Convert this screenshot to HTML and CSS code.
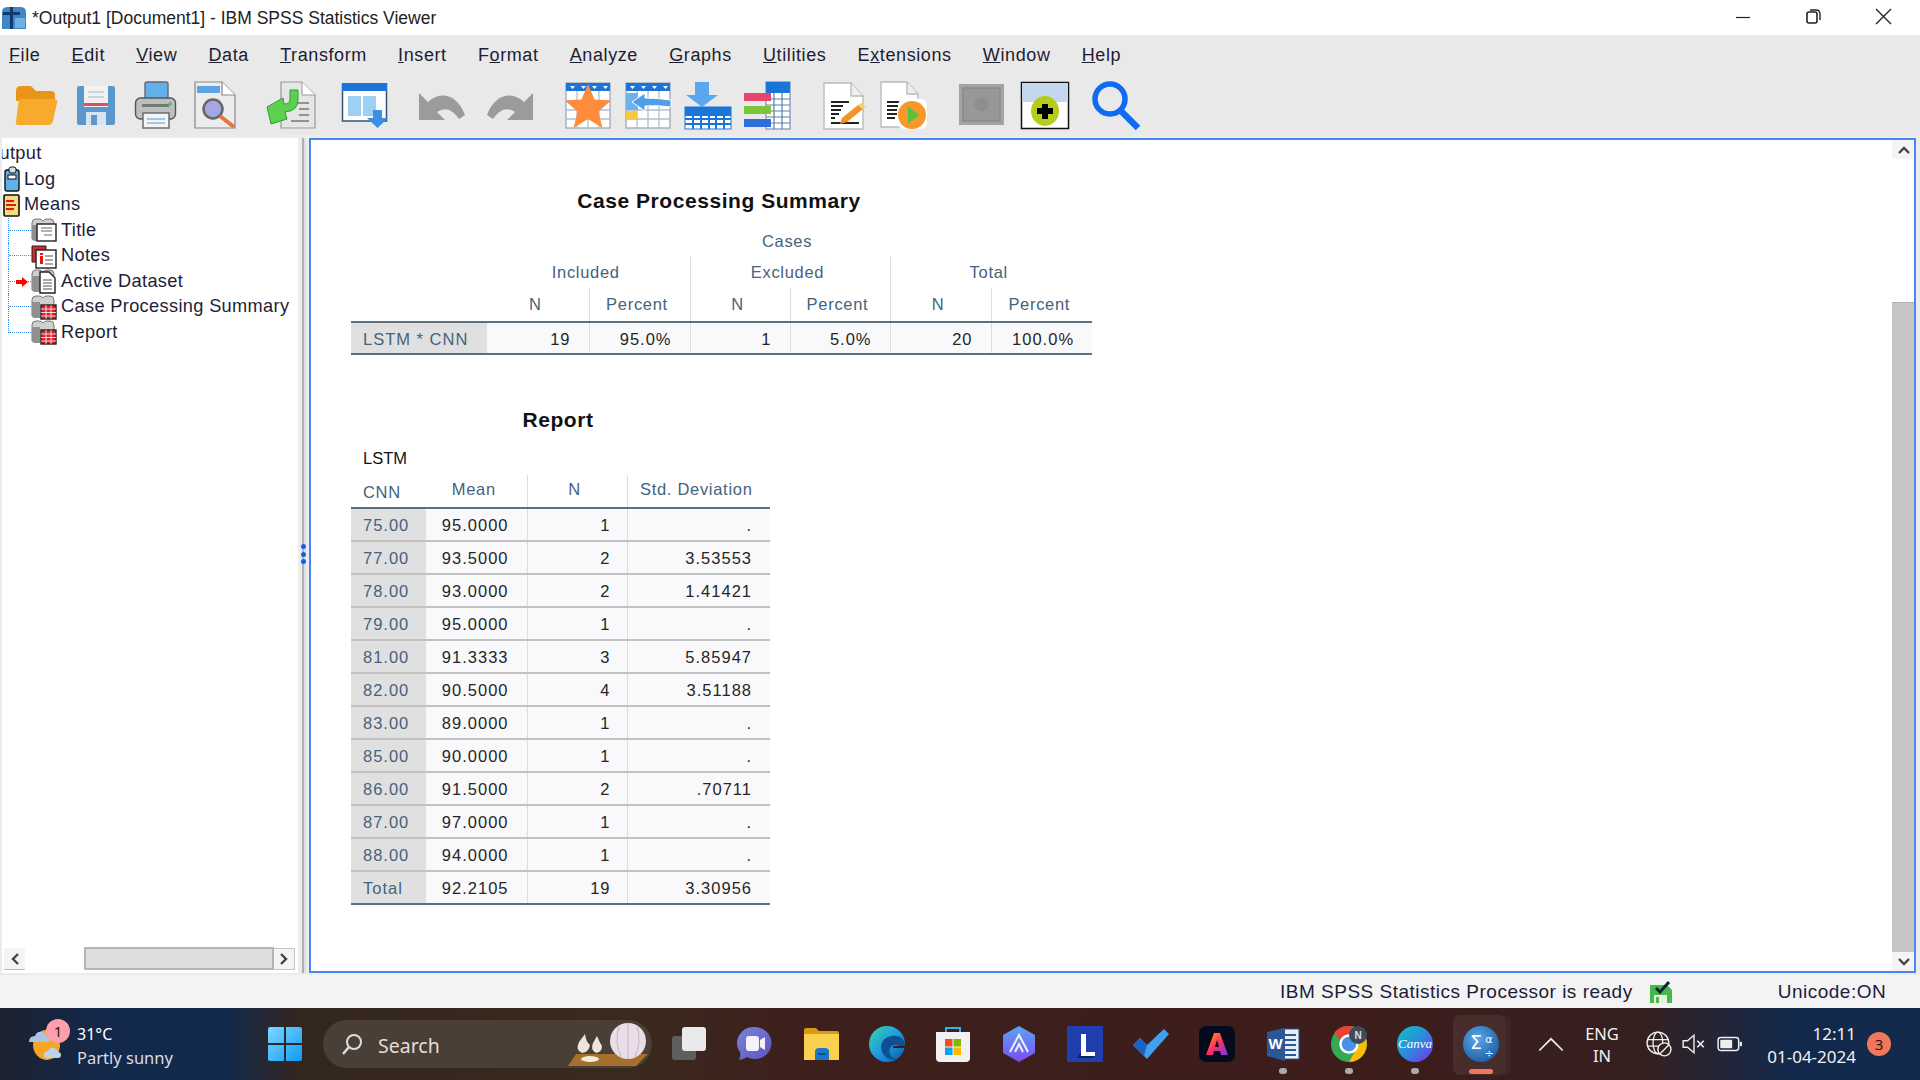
FILE: index.html
```html
<!DOCTYPE html>
<html lang="en">
<head>
<meta charset="utf-8">
<title>IBM SPSS Statistics Viewer</title>
<link rel="stylesheet" href="styles.css">
</head>
<body>
<svg class="defs" width="0" height="0">
  <symbol id="book" viewBox="0 0 26 26">
    <path d="M1 6q0-4 4-4h3q3 0 4 2 1-2 4-2h3q4 0 4 4v16H1z" fill="#cfcfcf" stroke="#777" stroke-width="1"/>
    <path d="M1 8v13q0 3 3 3h5V8z" fill="#8f8f8f"/>
  </symbol>
</svg>
<div class="app">
  <header class="titlebar">
    <svg class="appicon" viewBox="0 0 24 24"><path d="M0 6q0-5 6-5h12q6 0 6 5v17H0z" fill="#3f86c6"/><path d="M8 1h3v5h7v3h-7v14H8V9H1V6h7z" fill="#123a6b"/><rect x="13" y="12" width="10" height="10" fill="#6fb1e4"/></svg>
    <span class="doctitle">*Output1 [Document1] - IBM SPSS Statistics Viewer</span>
    <div class="winctl">
      <svg class="ctl" viewBox="0 0 70 35"><path d="M28 17.5h14" stroke="#222" stroke-width="1.2"/></svg>
      <svg class="ctl" viewBox="0 0 70 35"><rect x="29" y="12" width="10" height="11" rx="2" fill="none" stroke="#222" stroke-width="1.6"/><path d="M32 10h6q4 0 4 4v6" fill="none" stroke="#222" stroke-width="1.4"/></svg>
      <svg class="ctl" viewBox="0 0 70 35"><path d="M28 9l15 15M43 9L28 24" stroke="#222" stroke-width="1.4"/></svg>
    </div>
  </header>
  <nav class="menubar">
    <span><u>F</u>ile</span><span><u>E</u>dit</span><span><u>V</u>iew</span><span><u>D</u>ata</span><span><u>T</u>ransform</span><span><u>I</u>nsert</span><span>F<u>o</u>rmat</span><span><u>A</u>nalyze</span><span><u>G</u>raphs</span><span><u>U</u>tilities</span><span>E<u>x</u>tensions</span><span><u>W</u>indow</span><span><u>H</u>elp</span>
  </nav>
  <div class="toolbar">
    <svg class="tool" viewBox="0 0 60 60"><path d="M11 16q0-5 5-5h10l5 5h15q4 0 4 4v6H11z" fill="#e8951a"/><path d="M14 24h35q4 0 3 4l-4 18q-1 4-5 4H13q-3 0-2-4z" fill="#f7aa2b"/></svg>
    <svg class="tool" viewBox="0 0 60 60"><path d="M12 13q0-2 2-2h34q2 0 2 2v35q0 2-2 2H14q-2 0-2-2z" fill="#5b97cb"/><rect x="19" y="11" width="24" height="21" fill="#f1f1f4"/><rect x="19" y="28" width="24" height="3" fill="#d9506a"/><path d="M23 17h16M23 22h16" stroke="#c5c9d0" stroke-width="1.5"/><rect x="21" y="37" width="20" height="13" fill="#d6e4f0"/><rect x="26" y="40" width="6" height="10" fill="#5b97cb"/></svg>
    <svg class="tool" viewBox="0 0 60 60"><rect x="20" y="7" width="23" height="20" rx="2" fill="#62b0ea" stroke="#667" stroke-width="1.4"/><rect x="10.500" y="23" width="40" height="21" rx="5" fill="#bcbfbf" stroke="#555" stroke-width="1.4"/><rect x="17" y="29" width="27" height="3" fill="#777"/><circle cx="45" cy="29" r="1.800" fill="#4bc04b"/><rect x="18" y="38" width="26" height="15" fill="#f2f4f6" stroke="#666" stroke-width="1.4"/><path d="M22 44h18M22 48h18" stroke="#8bb8dc" stroke-width="1.5"/></svg>
    <svg class="tool" viewBox="0 0 60 60"><path d="M10 7h27l13 13v33H10z" fill="#ececec" stroke="#888" stroke-width="1.200"/><path d="M37 7v13h13" fill="#fff" stroke="#888" stroke-width="1.200"/><rect x="12" y="11" width="23" height="7" fill="#5ca4e4"/><circle cx="28" cy="34" r="9.500" fill="#a4a6e6" stroke="#666" stroke-width="2.500"/><path d="M35 41l14 11" stroke="#e8743b" stroke-width="4"/></svg>
    <svg class="tool m16" viewBox="0 0 60 60"><path d="M20 7h21l13 13v33H20z" fill="#e6e6e6" stroke="#999" stroke-width="1.200"/><path d="M41 7v13h13" fill="#fff" stroke="#999"/><path d="M34 28h14M38 34h10M38 40h10M30 46h18" stroke="#777" stroke-width="1.500"/><path d="M6 32l16-9 1 6q6 0 6-5v-9h8v10q0 11-13 12l2 7-16 5z" fill="#5ed04f" stroke="#2f9c32" stroke-width="1"/></svg>
    <svg class="tool m14" viewBox="0 0 60 60"><rect x="7.500" y="9" width="44" height="37" fill="#fff" stroke="#39527a" stroke-width="1.500"/><rect x="7" y="8" width="45" height="8" fill="#1b74d8"/><rect x="13" y="21" width="13" height="20" fill="#9dd0f3"/><rect x="28" y="21" width="13" height="20" fill="#9dd0f3"/><path d="M38 35h9v8h6L42.500 53 32 43h6z" fill="#3d8ee4"/></svg>
    <svg class="tool m16" viewBox="0 0 60 60"><path d="M8 18v27h26l-8-8q12-8 22 7l6-4C46 18 28 16 17 27z" fill="#9b9b9b"/></svg>
    <svg class="tool m9" viewBox="0 0 60 60"><path d="M53 18v27H27l8-8q-12-8-22 7l-6-4C15 18 33 16 44 27z" fill="#9b9b9b"/></svg>
    <svg class="tool m18" viewBox="0 0 60 60"><rect x="8" y="8" width="44" height="45" fill="#fff" stroke="#9aa8b8" stroke-width="1.300"/><path d="M8 26h44M8 35h44M8 44h44M19 16v37M30 16v37M41 16v37" stroke="#b4bfca" stroke-width="1.300"/><rect x="8" y="8" width="44" height="8" fill="#1b74d8"/><path d="M12 11h5l-2.500 3zM23 11h5l-2.500 3zM34 11h5l-2.500 3zM45 11h5l-2.500 3z" fill="#fff"/><path d="M30 9l6.500 15.500 16.500 1-12.500 11 4 16.500L30 44l-14.500 9 4-16.500L7 25.500l16.500-1z" fill="#ff8b3d"/></svg>
    <svg class="tool" viewBox="0 0 60 60"><rect x="8" y="8" width="44" height="45" fill="#fff" stroke="#9aa8b8" stroke-width="1.300"/><path d="M8 26h44M8 35h44M8 44h44M19 16v37M30 16v37M41 16v37" stroke="#b4bfca" stroke-width="1.300"/><rect x="8" y="8" width="44" height="8" fill="#1b74d8"/><path d="M12 11h5l-2.500 3zM23 11h5l-2.500 3zM34 11h5l-2.500 3zM45 11h5l-2.500 3z" fill="#fff"/><rect x="8" y="18" width="12" height="17" fill="#6cb2ee"/><rect x="8" y="36" width="11" height="8" fill="#f5c842"/><path d="M14 27l13-9v5q12 0 26 2v7q-14-2-26-1v5z" fill="#4f9fe8" stroke="#fff" stroke-width="1"/></svg>
    <svg class="tool" viewBox="0 0 60 60"><path d="M17 7h14v13h9L24 32 8 20h9z" fill="#5aa7f0"/><rect x="7" y="32" width="46" height="22" fill="#fff" stroke="#1b74d8" stroke-width="1"/><rect x="7" y="32" width="46" height="9" fill="#1b74d8"/><path d="M7 44h46M7 49h46" stroke="#1b74d8" stroke-width="2"/><path d="M15 41v13M23 41v13M31 41v13M38 41v13M46 41v13" stroke="#1b74d8" stroke-width="2"/></svg>
    <svg class="tool" viewBox="0 0 60 60"><rect x="28" y="7" width="24" height="47" fill="#fff" stroke="#5a80b0" stroke-width="1"/><rect x="28" y="7" width="24" height="11" fill="#1b74d8"/><path d="M28 24h24M28 30h24M28 36h24M28 42h24M28 48h24M36 18v36M44 18v36" stroke="#5a80b0" stroke-width="1.200"/><rect x="6" y="18" width="27" height="8" fill="#e5476f"/><rect x="6" y="31" width="27" height="8" fill="#7cc63c"/><rect x="6" y="44" width="27" height="8" fill="#2f6fd8"/></svg>
    <svg class="tool m16" viewBox="0 0 60 60"><path d="M10 8h27l12 13v33H10z" fill="#fff" stroke="#bbb" stroke-width="1.400"/><path d="M37 8v13h12" fill="#eee" stroke="#bbb" stroke-width="1.400"/><path d="M17 27h18M17 31h12M17 35h10M17 39h8M17 43h4M17 48h28" stroke="#222" stroke-width="2.200"/><path d="M28 43l16-13 5 4-16 13-7 2z" fill="#f0942a"/><path d="M44 30l3-2 5 4-3 2z" fill="#f5d56a"/></svg>
    <svg class="tool" viewBox="0 0 60 60"><path d="M7 7h26l11 12v33H7z" fill="#fff" stroke="#bbb" stroke-width="1.400"/><path d="M33 7v12h11" fill="#eee" stroke="#bbb" stroke-width="1.400"/><path d="M13 27h16M13 31h14M13 35h10M13 39h10M13 43h8" stroke="#222" stroke-width="2.200"/><rect x="24" y="24" width="29" height="30" rx="6" fill="#fff"/><ellipse cx="38" cy="40" rx="14" ry="14" fill="#f8972a"/><path d="M34 31l11 9-11 9z" fill="#58c43e"/></svg>
    <svg class="tool m18" viewBox="0 0 60 60"><rect x="7" y="9" width="45" height="41" fill="#a3a3a3"/><rect x="11" y="13" width="37" height="33" fill="#989898" stroke="#8a8a8a" stroke-width="1.500"/><circle cx="29.500" cy="29.500" r="7" fill="#8e8e8e"/></svg>
    <svg class="tool m3" viewBox="0 0 60 60"><rect x="6.500" y="7.500" width="47" height="46" fill="#fff" stroke="#111" stroke-width="1.500"/><rect x="7" y="8" width="46" height="19" fill="#c3d8ee"/><ellipse cx="30" cy="36" rx="14" ry="15" fill="#b6cc1c"/><path d="M27 29h6v4h5v6h-5v5h-6v-5h-5v-6h5z" fill="#000"/></svg>
    <svg class="tool m11" viewBox="0 0 60 60"><circle cx="24" cy="24" r="15" fill="none" stroke="#0f6cf2" stroke-width="5.500"/><path d="M35 36l17 17" stroke="#0f6cf2" stroke-width="6.500"/></svg>
  </div>

  <main class="workspace">
    <aside class="outline">
      <div class="tree">
        <div class="tree-root">Output</div>
        <div class="tree-row"><svg class="node-icon" viewBox="0 0 18 26"><rect x="3" y="4" width="14" height="21" rx="2" fill="#5fb2e8" stroke="#111" stroke-width="1.400"/><rect x="7" y="1" width="7" height="6" rx="2" fill="#ddd" stroke="#111"/><rect x="6" y="9" width="8" height="4" fill="#fff" stroke="#111"/></svg><span>Log</span></div>
        <div class="tree-row"><svg class="node-icon" viewBox="0 0 18 26"><rect x="2" y="3" width="15" height="21" rx="1" fill="#f6dc7c" stroke="#111" stroke-width="1.600"/><path d="M4 9h8M4 13h10M4 17h8" stroke="#e01818" stroke-width="2"/></svg><span>Means</span></div>
        <div class="tree-row child"><i class="conn"></i><svg class="leaf" viewBox="0 0 26 26"><use href="#book"/><rect x="6" y="7" width="19" height="17" fill="#fff" stroke="#222" stroke-width="1.400"/><path d="M10 11h11M10 14h11M13 18h8" stroke="#666"/></svg><span>Title</span></div>
        <div class="tree-row child"><i class="conn"></i><svg class="leaf" viewBox="0 0 26 26"><path d="M1 3h14v16H1z" fill="#cc2b2b" stroke="#222"/><rect x="5" y="7" width="20" height="18" fill="#fff" stroke="#222" stroke-width="1.400"/><rect x="9" y="13" width="3" height="8" fill="#e01818"/><rect x="9" y="10" width="3" height="2" fill="#e01818"/><path d="M14 13h8M14 17h8M14 21h8" stroke="#555"/></svg><span>Notes</span></div>
        <div class="tree-row child"><i class="conn"><svg class="marker" viewBox="0 0 12 10"><path d="M0 3h6V0l6 5-6 5V7H0z" fill="#f00"/></svg></i><svg class="leaf" viewBox="0 0 26 26"><use href="#book"/><path d="M9 4h9l6 6v15H9z" fill="#fff" stroke="#222" stroke-width="1.400"/><path d="M12 12h9M12 15h9M12 18h9M12 21h9" stroke="#555"/></svg><span>Active Dataset</span></div>
        <div class="tree-row child"><i class="conn"></i><svg class="leaf" viewBox="0 0 26 26"><use href="#book"/><rect x="10" y="11" width="15" height="14" fill="#d8242c" stroke="#222" stroke-width="1.400"/><path d="M10 15h15M10 18.500h15M10 22h15M15 11v14M20 11v14" stroke="#fff" stroke-width=".8"/></svg><span>Case Processing Summary</span></div>
        <div class="tree-row child last"><i class="conn"></i><svg class="leaf" viewBox="0 0 26 26"><use href="#book"/><rect x="10" y="11" width="15" height="14" fill="#d8242c" stroke="#222" stroke-width="1.400"/><path d="M10 15h15M10 18.500h15M10 22h15M15 11v14M20 11v14" stroke="#fff" stroke-width=".8"/></svg><span>Report</span></div>
      </div>
      <div class="hscroll">
        <div class="sbtn left"><svg viewBox="0 0 12 14"><path d="M9 2L4 7l5 5" fill="none" stroke="#444" stroke-width="2.400"/></svg></div>
        <div class="hthumb"></div>
        <div class="sbtn right"><svg viewBox="0 0 12 14"><path d="M3 2l5 5-5 5" fill="none" stroke="#444" stroke-width="2.400"/></svg></div>
      </div>
    </aside>
    <div class="splitter"><span></span><span></span><span></span></div>
    <section class="viewer">
      <div class="doc">
        <div class="pivot p1">
          <h2 class="ptitle">Case Processing Summary</h2>
          <table class="ptable t1">
            <colgroup><col class="c136"><col class="c102"><col class="c101"><col class="c100"><col class="c100"><col class="c101"><col class="c101"></colgroup>
            <tr class="r-a"><th></th><th colspan="6">Cases</th></tr>
            <tr class="r-b"><th></th><th colspan="2">Included</th><th colspan="2" class="vl">Excluded</th><th colspan="2" class="vl">Total</th></tr>
            <tr class="r-c"><th></th><th>N</th><th class="vl">Percent</th><th class="vl">N</th><th class="vl">Percent</th><th class="vl">N</th><th class="vl">Percent</th></tr>
            <tr class="r-d last"><th class="stub">LSTM * CNN</th><td>19</td><td class="vl">95.0%</td><td class="vl">1</td><td class="vl">5.0%</td><td class="vl">20</td><td class="vl">100.0%</td></tr>
          </table>
        </div>
        <div class="pivot p2">
          <h2 class="ptitle">Report</h2>
          <div class="pvar">LSTM</div>
          <table class="ptable t2">
            <colgroup><col class="c75"><col class="c101"><col class="c100"><col class="c143"></colgroup>
            <tr class="r-h"><th class="cnn">CNN</th><th>Mean</th><th class="vl">N</th><th class="vl">Std. Deviation</th></tr>
            <tr><th class="stub">75.00</th><td>95.0000</td><td class="vl count">1</td><td class="vl">.</td></tr>
            <tr><th class="stub">77.00</th><td>93.5000</td><td class="vl count">2</td><td class="vl">3.53553</td></tr>
            <tr><th class="stub">78.00</th><td>93.0000</td><td class="vl count">2</td><td class="vl">1.41421</td></tr>
            <tr><th class="stub">79.00</th><td>95.0000</td><td class="vl count">1</td><td class="vl">.</td></tr>
            <tr><th class="stub">81.00</th><td>91.3333</td><td class="vl count">3</td><td class="vl">5.85947</td></tr>
            <tr><th class="stub">82.00</th><td>90.5000</td><td class="vl count">4</td><td class="vl">3.51188</td></tr>
            <tr><th class="stub">83.00</th><td>89.0000</td><td class="vl count">1</td><td class="vl">.</td></tr>
            <tr><th class="stub">85.00</th><td>90.0000</td><td class="vl count">1</td><td class="vl">.</td></tr>
            <tr><th class="stub">86.00</th><td>91.5000</td><td class="vl count">2</td><td class="vl">.70711</td></tr>
            <tr><th class="stub">87.00</th><td>97.0000</td><td class="vl count">1</td><td class="vl">.</td></tr>
            <tr><th class="stub">88.00</th><td>94.0000</td><td class="vl count">1</td><td class="vl">.</td></tr>
            <tr class="last"><th class="stub">Total</th><td>92.2105</td><td class="vl count">19</td><td class="vl">3.30956</td></tr>
          </table>
        </div>
      </div>
      <div class="vscroll">
        <div class="vbtn"><svg viewBox="0 0 14 10"><path d="M2 8l5-5 5 5" fill="none" stroke="#444" stroke-width="2.400"/></svg></div>
        <div class="vtrack"></div>
        <div class="vthumb"></div>
        <div class="vbtn"><svg viewBox="0 0 14 10"><path d="M2 2l5 5 5-5" fill="none" stroke="#444" stroke-width="2.400"/></svg></div>
      </div>
    </section>
  </main>

  <footer class="statusbar">
    <span>IBM SPSS Statistics Processor is ready</span>
    <svg class="ready" viewBox="0 0 24 24"><path d="M1 5h17l5 5v13H1z" fill="#46b84a"/><rect x="5" y="15" width="13" height="8" fill="#dff3df"/><rect x="7" y="17" width="3" height="6" fill="#46b84a"/><path d="M7 8l4 4 9-10" fill="none" stroke="#123" stroke-width="3"/></svg>
    <span class="unicode">Unicode:ON</span>
  </footer>

  <div class="taskbar">
    <div class="widget">
      <svg class="weather" viewBox="0 0 46 46"><path d="M20 12a14 15 0 1 0 0 30z" fill="#f29a1c"/><ellipse cx="20" cy="27" rx="13" ry="15" fill="#f6a524"/><path d="M2 24q0-6 6-6 2-5 7-4 4 1 5 5 3 0 3 3 0 2-2 2z" fill="#a9c5e6"/><path d="M19 40q-3-1-2-4 1-3 4-3 2-4 6-3 4 1 4 4 3 0 3 3 0 3-3 3z" fill="#bcd3ee"/><circle cx="31" cy="13" r="12" fill="#ff9fab"/><text x="31" y="18.500" text-anchor="middle" class="badge-t">1</text></svg>
      <div class="wtext"><span class="wtemp">31°C</span><span class="wdesc">Partly sunny</span></div>
    </div>
    <div class="cell start"><svg viewBox="0 0 36 36"><defs><linearGradient id="win" x1="0" y1="0" x2="1" y2="1"><stop offset="0" stop-color="#7fd6ff"/><stop offset="1" stop-color="#0f9bf5"/></linearGradient></defs><path d="M1 3q0-2 2-2h14v16H1zM19 1h14q2 0 2 2v14H19zM1 19h16v16H3q-2 0-2-2zM19 19h16v14q0 2-2 2H19z" fill="url(#win)"/></svg></div>
    <div class="searchbox">
      <svg class="sglass" viewBox="0 0 22 22"><circle cx="13" cy="9" r="7" fill="none" stroke="#ddd" stroke-width="2"/><path d="M8 14l-6 7" stroke="#ddd" stroke-width="2.400"/></svg>
      <span class="stext">Search</span>
      <svg class="garlic" viewBox="0 0 84 44"><path d="M10 32h72l-12 12H2z" fill="#a56f2e"/><circle cx="62" cy="19" r="18" fill="#e9dde8"/><path d="M62 1v36M53 5q-5 14 2 30M71 5q5 14-2 30" stroke="#c6b3c8" fill="none"/><path d="M16 31q-7-3-3-11l6-8q1 8 5 11-1 7-8 8zM30 31q-6-3-3-10l4-7q3 7 5 10 0 6-6 7z" fill="#efe4dc"/><ellipse cx="24" cy="37" rx="9" ry="3" fill="#f3ead8"/></svg>
    </div>
    <div class="apps">
      <div class="cell"><svg viewBox="0 0 36 36"><rect x="1" y="10" width="24" height="24" rx="3" fill="#5e5e5e"/><rect x="11" y="1" width="24" height="24" rx="3" fill="#eaeaea"/></svg></div>
      <div class="cell"><svg viewBox="0 0 36 36"><defs><linearGradient id="tm" x1="0" y1="0" x2="1" y2="1"><stop offset="0" stop-color="#7b83d8"/><stop offset="1" stop-color="#5a55c0"/></linearGradient></defs><path d="M18 1a16.500 16 0 1 1-8 30q-4 3-8 3 2-4 1-8A16.500 16 0 0 1 18 1z" fill="url(#tm)"/><rect x="9" y="10" width="13" height="15" rx="3" fill="#f4f1fb"/><path d="M23 14l5-3v13l-5-3z" fill="#f4f1fb"/></svg></div>
      <div class="cell"><svg viewBox="0 0 36 36"><path d="M1 4q0-2 2-2h10l3 3h18q2 0 2 2v27H1z" fill="#d99a10"/><path d="M1 8h35v26H1z" fill="#fbd04e"/><path d="M12 26q0-4 4-4h6q4 0 4 4v8H12z" fill="#1878c8"/><path d="M15 28h8" stroke="#0c4f8e" stroke-width="2"/></svg></div>
      <div class="cell"><svg viewBox="0 0 36 36"><defs><linearGradient id="edg" x1="0" y1="0" x2="1" y2="1"><stop offset="0" stop-color="#3fd0a5"/><stop offset=".5" stop-color="#1b9de2"/><stop offset="1" stop-color="#0c59a4"/></linearGradient></defs><circle cx="18" cy="18" r="18" fill="url(#edg)"/><path d="M36 20c0-8-7-11-13-10-10 1-14 11-8 19 3 4 9 6 14 4-7 0-10-6-8-11 2-4 7-4 9-2z" fill="#0d4f91"/><path d="M24 20h12v2H24z" fill="#3a1f1c"/></svg></div>
      <div class="cell"><svg viewBox="0 0 36 36"><path d="M11 7V2h14v5" fill="none" stroke="#29b5f0" stroke-width="2"/><path d="M1 6h34v26q0 4-4 4H5q-4 0-4-4z" fill="#f1f1f1"/><rect x="10" y="13" width="7.500" height="7.500" fill="#f25022"/><rect x="18.500" y="13" width="7.500" height="7.500" fill="#7fba00"/><rect x="10" y="21.500" width="7.500" height="7.500" fill="#00a4ef"/><rect x="18.500" y="21.500" width="7.500" height="7.500" fill="#ffb900"/></svg></div>
      <div class="cell"><svg viewBox="0 0 36 36"><defs><linearGradient id="ar" x1="0" y1="0" x2="0" y2="1"><stop offset="0" stop-color="#5ba3f5"/><stop offset="1" stop-color="#7a4df0"/></linearGradient></defs><path d="M18 0l16 9v18l-16 9-16-9V9z" fill="url(#ar)"/><path d="M9 26l9-17 9 17M14 26l4-8 4 8" fill="none" stroke="#e8f0ff" stroke-width="2"/></svg></div>
      <div class="cell"><svg viewBox="0 0 36 36"><rect width="36" height="36" fill="#1f3fae"/><path d="M14 8h5v18h9v4H14z" fill="#fff"/><path d="M10 32l4-6v4h14l-2 2z" fill="#0b2560"/></svg></div>
      <div class="cell"><svg viewBox="0 0 36 36"><path d="M0 19l7-7 7 7 17-16 5 5-22 25z" fill="#41a1ec"/><path d="M0 19l7-7 7 7-3 11z" fill="#1c62c4"/></svg></div>
      <div class="cell"><svg viewBox="0 0 36 36"><defs><linearGradient id="ad" x1="0" y1="0" x2="1" y2="1"><stop offset="0" stop-color="#ffb000"/><stop offset=".5" stop-color="#ff2e63"/><stop offset="1" stop-color="#6a3cf0"/></linearGradient></defs><rect width="36" height="36" rx="7" fill="#050a1c"/><path d="M15 7h6l8 22h-7l-1-4h-6l-1 4H7z" fill="url(#ad)"/><path d="M18 14l2 7h-4z" fill="#050a1c"/></svg></div>
      <div class="cell dot"><svg viewBox="0 0 36 36"><rect x="16" y="3" width="18" height="30" fill="#e8eef8" stroke="#2b5796" stroke-width="1"/><path d="M20 9h11M20 14h11M20 19h11M20 24h11M20 29h11" stroke="#2b5796" stroke-width="2"/><path d="M2 6l18-4v33L2 30z" fill="#2b5796"/><text x="10.500" y="23" text-anchor="middle" class="word-t">W</text></svg></div>
      <div class="cell dot"><svg viewBox="0 0 36 36"><circle cx="18" cy="18" r="18" fill="#34a853"/><path d="M18 0a18 18 0 0 1 16 10H18a8 8 0 0 0-7.500 5L3 7a18 18 0 0 1 15-7z" fill="#ea4335"/><path d="M34 10a18 18 0 0 1-16 26l8-14a8 8 0 0 0 0-12z" fill="#fbbc05"/><circle cx="18" cy="18" r="8.500" fill="#4a90e8" stroke="#fff" stroke-width="2.500"/><circle cx="27" cy="9" r="9" fill="#3d4d57"/><text x="27" y="12.500" text-anchor="middle" class="n-t">N</text></svg></div>
      <div class="cell dot"><svg viewBox="0 0 36 36"><defs><linearGradient id="cv" x1="0" y1="0" x2="1" y2="1"><stop offset="0" stop-color="#0fc4c8"/><stop offset=".5" stop-color="#2a8bdc"/><stop offset="1" stop-color="#7a2ff0"/></linearGradient></defs><circle cx="18" cy="18" r="18" fill="url(#cv)"/><text x="18" y="22" text-anchor="middle" class="canva-t">Canva</text></svg></div>
      <div class="cell running"><svg viewBox="0 0 36 36"><defs><radialGradient id="sp" cx=".4" cy=".35" r=".7"><stop offset="0" stop-color="#5ba8e6"/><stop offset="1" stop-color="#1c5fa5"/></radialGradient></defs><circle cx="18" cy="18" r="18" fill="url(#sp)"/><text x="13" y="23" text-anchor="middle" class="sig">Σ</text><text x="26" y="17" text-anchor="middle" class="alp">α</text><text x="26" y="31" text-anchor="middle" class="alp">÷</text></svg></div>
    </div>
    <div class="tray">
      <div class="tcell"><svg viewBox="0 0 20 12"><path d="M1 11l9-9 9 9" fill="none" stroke="#eee" stroke-width="1.300"/></svg></div>
      <div class="lang"><span>ENG</span><span>IN</span></div>
      <div class="tcell g6"><svg viewBox="0 0 24 24"><circle cx="11" cy="11" r="10" fill="none" stroke="#eee" stroke-width="1.300"/><ellipse cx="11" cy="11" rx="4.500" ry="10" fill="none" stroke="#eee" stroke-width="1.200"/><path d="M1 8h20M1 14h20" stroke="#eee" stroke-width="1.200"/><circle cx="17" cy="17" r="6" fill="#35201f" stroke="#eee" stroke-width="1.300"/><path d="M13 21l8-8" stroke="#eee" stroke-width="1.300"/></svg></div>
      <div class="tcell g1"><svg viewBox="0 0 24 24"><path d="M2 9h4l6-5v16l-6-5H2z" fill="none" stroke="#eee" stroke-width="1.300"/><path d="M15 9l6 6M21 9l-6 6" stroke="#eee" stroke-width="1.500"/></svg></div>
      <div class="tcell g2"><svg viewBox="0 0 24 16"><rect x="1" y="2" width="19" height="12" rx="2.500" fill="none" stroke="#eee" stroke-width="1.400"/><rect x="3" y="4" width="11" height="8" rx="1" fill="#eee"/><rect x="21" y="6" width="2" height="4" fill="#eee"/></svg></div>
      <div class="clock"><span>12:11</span><span>01-04-2024</span></div>
      <div class="notif">3</div>
    </div>
  </div>
</div>
</body>
</html>
```
FILE: styles.css
```css
* { box-sizing: border-box; }
html, body { margin: 0; padding: 0; height: 100%; overflow: hidden; }
body { font-family: "Liberation Sans", Arial, sans-serif; color: #1c1c2c; background: #f3f3f3; }
.defs { position: absolute; }
.app { display: flex; flex-direction: column; width: 1920px; height: 1080px; }

/* Title bar */
.titlebar { display: flex; align-items: center; height: 35px; background: #fff; padding-left: 2px; flex: none; }
.appicon { width: 24px; height: 24px; margin-right: 6px; }
.doctitle { font-size: 17.5px; color: #222; padding-top: 2px; }
.winctl { margin-left: auto; display: flex; margin-right: 2px; }
.ctl { width: 70px; height: 35px; display: block; }

/* Menu and toolbar */
.menubar { display: flex; align-items: center; gap: 31.2px; height: 40px; background: #e9e9e9; padding-left: 9px; flex: none; font-size: 18px; letter-spacing: .6px; color: #1d1d30; }
.toolbar { display: flex; align-items: center; height: 60px; background: #e9e9e9; padding-left: 5px; flex: none; }
.tool { width: 60px; height: 60px; flex: none; }
.m3 { margin-left: 3px; } .m9 { margin-left: 9px; } .m11 { margin-left: 11px; }
.m14 { margin-left: 14px; } .m16 { margin-left: 16px; } .m18 { margin-left: 18px; }

/* Workspace */
.workspace { display: flex; height: 840px; flex: none; background: #ececec; padding: 3px 4px 2px 2px; }
.outline { width: 296px; background: #fff; display: flex; flex-direction: column; overflow: hidden; flex: none; }
.tree { flex: 1; padding-top: 3px; font-size: 18.2px; letter-spacing: .35px; color: #1e1e38; }
.tree-root { height: 25.5px; line-height: 25.5px; margin-left: -17px; }
.tree-row { display: flex; align-items: center; height: 25.5px; }
.node-icon { width: 18px; height: 26px; margin-right: 4px; flex: none; }
.child { padding-left: 6px; }
.conn { position: relative; display: block; width: 24px; height: 25.5px; border-left: 1.500px dotted #3d8ef0; flex: none; }
.conn::after { content: ""; position: absolute; left: 0; top: 12px; width: 22px; border-top: 1.500px dotted #3d8ef0; }
.last .conn { height: 13px; align-self: flex-start; }
.marker { position: absolute; left: 7px; top: 8px; width: 12px; height: 10px; z-index: 1; background: #fff; }
.leaf { width: 26px; height: 26px; margin-right: 4px; margin-left: -1px; flex: none; }
.hscroll { display: flex; height: 26px; padding: 0 3px 3px 2px; align-items: flex-end; flex: none; }
.sbtn { width: 21px; height: 22px; background: #f4f4f4; display: flex; align-items: center; justify-content: center; }
.sbtn svg { width: 12px; height: 14px; }
.sbtn.left { border-bottom: 1px solid #bbb; }
.sbtn.right { border: 1px solid #c4c4c4; border-left: 0; }
.hthumb { width: 190px; height: 23px; margin-left: 59px; background: #dedede; border: 2px solid #b5b5b5; }
.splitter { position: relative; width: 11px; flex: none; background: linear-gradient(to right, #ececec 0 4px, #b0b0b0 4px 6px, #e0e0e0 6px 8px, #ececec 8px); }
.splitter span { position: absolute; left: 3px; width: 5px; height: 5px; border-radius: 50%; background: #1260f0; }
.splitter span:nth-child(1) { top: 406px; }
.splitter span:nth-child(2) { top: 414px; }
.splitter span:nth-child(3) { top: 421px; }
.viewer { display: flex; flex: 1; background: #fff; border: 2px solid #4a86f0; min-width: 0; }
.doc { flex: 1; padding: 45px 0 0 40px; }
.vscroll { width: 22px; display: flex; flex-direction: column; flex: none; }
.vbtn { height: 19px; background: #f4f4f4; display: flex; align-items: center; justify-content: center; flex: none; padding-left: 1px; }
.vbtn svg { width: 14px; height: 10px; }
.vtrack { height: 143px; background: #fff; flex: none; }
.vthumb { flex: 1; background: #c5c5c5; border-top: 1px solid #b0b0b0; }

/* Pivot tables */
.pivot { display: block; }
.p1 { width: 741px; }
.p2 { width: 419px; margin-top: 49px; }
.ptitle { margin: 0; height: 32px; line-height: 32px; font-size: 21px; letter-spacing: .55px; font-weight: 700; text-align: center; color: #111; padding-right: 5px; }
.p1 .ptitle { margin-bottom: 9px; }
.pvar { height: 35px; line-height: 36px; padding-left: 12px; font-size: 16.5px; color: #111; margin-top: 4px; }
.ptable { border-collapse: collapse; table-layout: fixed; font-size: 16.5px; letter-spacing: 1px; }
.t1 { width: 741px; }
.t2 { width: 419px; }
.c136 { width: 136px; } .c102 { width: 102px; } .c101 { width: 101px; } .c100 { width: 100px; }
.c75 { width: 75px; } .c143 { width: 143px; }
.ptable th, .ptable td { padding: 0; font-weight: 400; }
.ptable th { color: #44637c; text-align: center; letter-spacing: .7px; padding-right: 5px; }
.ptable td { color: #262626; text-align: right; padding: 2px 18px 0 0; background: #f9f9fb; }
.ptable .count { padding-right: 16px; }
.ptable .vl { border-left: 1px solid #dedede; }
.ptable .stub { background: #e0e0e0; text-align: left; padding: 2px 0 0 12px; letter-spacing: 1px; }
.r-a { height: 31px; } .r-b { height: 31px; } .r-c { height: 34px; }
.r-c th, .r-h th { border-bottom: 2px solid #5d707f; }
.r-d { height: 32px; }
.t2 tr { height: 33px; }
.t2 td, .t2 .stub { border-bottom: 2px solid #c2c2c2; }
.t2 .r-h { height: 33px; }
.t2 .cnn { text-align: left; padding-left: 12px; vertical-align: bottom; }
.t2 .r-h th { padding-bottom: 3px; }
.t2 .r-h .cnn { padding-bottom: 5px; }
.t2 .last td, .t2 .last .stub, .t1 .last td, .t1 .last .stub { border-bottom: 2px solid #5d707f; }

/* Status bar */
.statusbar { display: flex; align-items: center; height: 33px; background: #f3f3f3; padding-left: 1280px; flex: none; font-size: 19px; letter-spacing: .5px; color: #1c1c3a; }
.ready { width: 24px; height: 24px; margin-left: 16px; }
.unicode { margin-left: 105px; }

/* Taskbar */
.taskbar { position: relative; display: flex; align-items: center; height: 72px; flex: none; color: #f2f2f2; font-family: "Noto Sans", sans-serif; background: linear-gradient(to right, #1c2230 0, #13294c 110px, #13294c 225px, #33261f 300px, #3a2a1e 620px, #3d1f1c 800px, #3c1d1b 1380px, #35201f 1640px, #13294c 1790px, #13294c 1920px); }
.widget { display: flex; align-items: center; width: 252px; padding-left: 27px; flex: none; }
.weather { width: 46px; height: 46px; margin-top: -6px; flex: none; }
.badge-t { font-family: "Noto Sans", sans-serif; font-size: 15px; fill: #222; }
.wtext { display: flex; flex-direction: column; margin-left: 4px; line-height: 24px; padding-top: 4px; }
.wtemp { font-size: 16px; color: #fff; }
.wdesc { font-size: 16.5px; color: #d9dde4; }
.cell { position: relative; display: flex; align-items: center; justify-content: center; width: 66px; height: 72px; flex: none; }
.cell svg { width: 36px; height: 36px; display: block; }
.dot::after { content: ""; position: absolute; left: 29px; top: 60px; width: 8px; height: 6px; border-radius: 3px; background: #aaa; }
.searchbox { display: flex; align-items: center; width: 329px; height: 48px; margin-left: 5px; border-radius: 24px; padding-left: 18px; background: #4a3f36; flex: none; }
.sglass { width: 22px; height: 22px; flex: none; }
.stext { font-size: 19.5px; margin-left: 15px; color: #e4dfda; padding-top: 2px; }
.garlic { width: 84px; height: 44px; margin-left: auto; margin-right: 2px; }
.apps { display: flex; margin-left: 4px; flex: none; }
.running::before { content: ""; position: absolute; left: 5px; top: 7px; width: 53px; height: 60px; border-radius: 7px; background: rgba(255,255,255,.07); box-shadow: 6px 0 0 -1px rgba(255,255,255,.04); }
.running::after { content: ""; position: absolute; left: 21px; top: 61px; width: 24px; height: 5px; border-radius: 3px; background: #f0775c; }
.running svg { position: relative; }
.tray { display: flex; align-items: center; margin-left: 20px; flex: none; }
.tcell { display: flex; align-items: center; justify-content: center; width: 34px; height: 40px; flex: none; }
.tcell svg { width: 26px; height: 26px; }
.g6 { margin-left: 6px; } .g1 { margin-left: 1px; } .g2 { margin-left: 2px; }
.lang { display: flex; flex-direction: column; align-items: center; width: 68px; font-size: 16.5px; line-height: 22px; padding-top: 2px; }
.clock { display: flex; flex-direction: column; align-items: flex-end; width: 109px; font-size: 17px; line-height: 23px; padding-top: 2px; }
.notif { width: 24px; height: 24px; margin-left: 11px; border-radius: 50%; background: #f0775c; color: #2a1410; font-size: 15px; line-height: 24px; text-align: center; }
.word-t { font-family: "Liberation Sans", sans-serif; font-size: 15px; font-weight: 700; fill: #fff; }
.n-t { font-family: "Liberation Sans", sans-serif; font-size: 10px; font-weight: 700; fill: #dde; }
.canva-t { font-family: "Liberation Serif", serif; font-style: italic; font-size: 13px; fill: #fff; }
.sig { font-family: "DejaVu Sans", sans-serif; font-size: 19px; fill: #fff; }
.alp { font-family: "DejaVu Sans", sans-serif; font-size: 11px; fill: #fff; }
```
